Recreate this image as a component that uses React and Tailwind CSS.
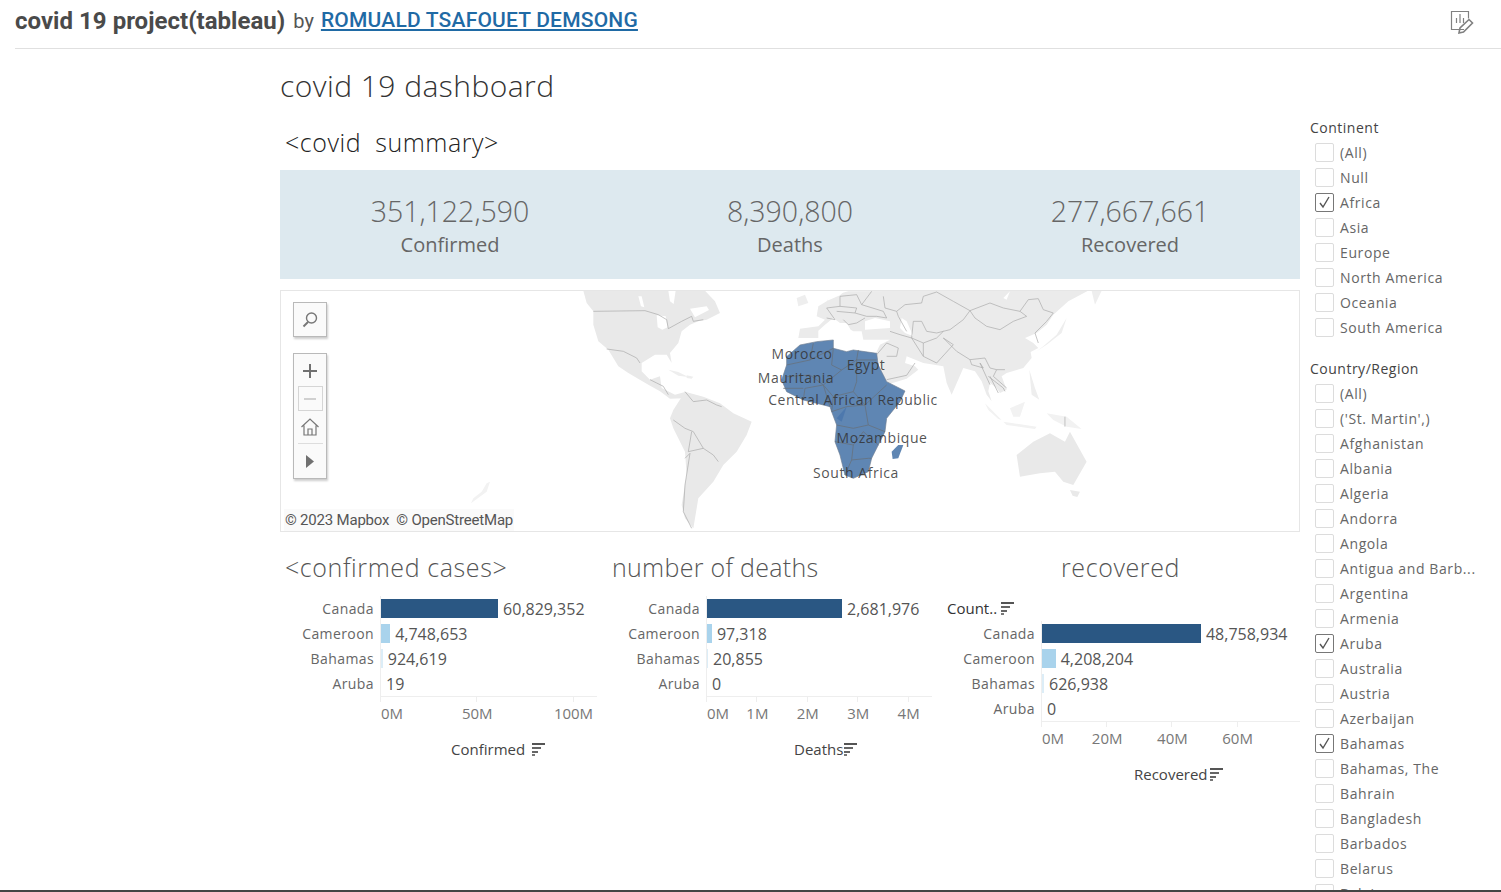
import React from 'react';

const continents = ['(All)', 'Null', 'Africa', 'Asia', 'Europe', 'North America', 'Oceania', 'South America'];
const countries = [
  '(All)', "('St. Martin',)", 'Afghanistan', 'Albania', 'Algeria', 'Andorra', 'Angola', 'Antigua and Barb...',
  'Argentina', 'Armenia', 'Aruba', 'Australia', 'Austria', 'Azerbaijan', 'Bahamas', 'Bahamas, The', 'Bahrain',
  'Bangladesh', 'Barbados', 'Belarus', 'Belgium',
];
const checked = ['Africa', 'Aruba', 'Bahamas'];

// north america, traced from the crop at (575,288) x3
const naLand = '25,8 390,8 420,40 435,75 395,95 370,100 345,110 320,130 310,165 285,195 290,225 275,200 240,200 200,225 200,250 225,275 240,270 255,265 260,300 300,320 330,312 345,330 285,332 255,310 220,290 160,255 130,235 100,185 70,160 55,110 55,70 35,45';
const naHoles = [
  '190,25 200,25 208,58 198,55',
  '280,8 302,8 296,48 285,40',
  '245,82 272,85 278,118 262,125 248,118',
  '345,62 395,55 402,66 360,88',
];
const naIslands = ['280,245 310,252 340,267 310,263', '335,262 355,266 350,272 335,270'];
const naLines = [
  '55,70 210,68 250,80 275,95 280,122 320,100 350,85 355,100 385,95',
  '95,183 145,190 185,210 195,225',
  '225,275 245,285 265,295 280,320',
];

// eurasia, traced from the crop at (790,288) x3
const euLand = '25,150 30,122 85,115 105,95 80,85 85,55 110,40 120,25 175,10 900,5 835,40 790,80 770,110 740,135 705,150 730,165 745,180 722,192 725,210 700,240 650,255 635,265 650,305 630,315 620,300 600,285 595,310 605,340 590,320 575,280 555,250 520,240 485,320 470,285 460,235 400,225 350,205 345,225 375,235 385,245 350,272 290,290 270,230 258,195 270,170 300,155 220,155 215,130 190,130 182,125 170,105 150,105 130,90 105,110 85,128 85,150';
const euHoles = [
  '225,100 255,90 300,100 300,120 225,125',
  '335,90 350,100 370,145 345,135 330,120',
  '640,30 660,10 650,35',
  '112,38 150,22 165,8 120,8',
];
const euIslands = [
  '20,30 45,20 55,45 25,55',
  '830,90 815,135 770,170 740,190 760,175 800,140',
  '905,8 935,8 915,50',
  '718,245 735,300 748,335 725,320',
];
const euLines = [
  '320,70 345,50 395,45 400,25 440,12 490,40 540,68 600,45 640,60 690,70 715,35 745,32 760,65 790,75 770,100 735,135 745,165',
  '540,68 555,90 590,115 630,125 670,100 710,85 690,70',
  '320,70 325,85 350,130',
  '370,100 395,100 410,130 440,135 480,125 520,95 540,68',
  '370,100 365,150 400,165 440,150 460,130',
  '460,150 500,190 540,215 585,210 600,240 620,245 645,245',
  '400,165 400,205 440,225 490,170 460,150',
  '300,130 330,140 365,150 400,205',
  '540,215 545,230 580,240 570,225 600,290',
  '600,265 625,315',
  '595,265 640,300 645,310',
  '620,245 610,265 650,300',
  '260,200 290,165 325,180 320,205 290,205',
  '290,275 350,262 375,225',
  '110,90 135,95 110,60 150,55 150,25 200,20 215,50 280,70 290,90 260,85 230,85 195,75 140,70',
  '160,95 175,110 200,105 225,90',
  '150,55 200,60 195,75',
  '215,50 245,10',
  '320,70 285,60 280,25',
];

// everything else, traced from the crop at (570,285) x3
const restLand = [
  '310,375 345,320 400,335 450,355 490,385 545,410 530,450 500,500 460,540 430,590 385,640 370,730 345,700 335,660 350,570 345,500 310,430 300,400',
  '1340,510 1390,470 1440,445 1485,470 1500,440 1550,530 1510,600 1480,590 1455,560 1410,565 1350,575',
  '1500,615 1530,620 1522,636 1508,632',
];
const restFaint = [
  '1245,355 1295,405 1285,402 1255,375',
  '1300,410 1400,425 1395,432 1310,420',
  '1320,370 1365,350 1350,395 1330,395',
  '1430,385 1490,395 1535,432 1490,425 1450,405',
  '-240,590 -250,620 -297,655 -290,640 -265,620 -250,595',
];
const restLines = [
  '345,320 370,350 410,345 440,360 455,365',
  '310,405 345,430 370,440 400,490 430,510 445,530',
  '345,520 360,505 345,600 340,680 365,730',
  '365,440 355,500 400,490',
  '1485,395 1485,425',
];
const africa = '650,215 690,180 740,170 790,165 790,190 830,200 850,195 920,205 925,240 950,290 1005,318 990,350 950,400 945,440 925,480 905,520 895,560 850,580 825,570 810,510 795,470 800,420 785,380 780,365 700,345 650,320 635,285 650,240';
const africaLines = [
  '650,240 720,225 790,190',
  '720,225 730,175',
  '790,190 785,240 815,255 860,225 865,195',
  '650,275 720,270 760,300 815,255',
  '860,225 920,225',
  '860,225 860,290 850,320 885,360 950,300',
  '700,345 705,310 760,300 780,365',
  '760,300 790,335 850,320',
  '790,335 785,380 830,365 885,360 895,420 945,440',
  '800,420 850,430 895,420',
  '795,470 850,480 880,440 925,480',
  '850,480 845,525 895,520 905,520',
  '825,570 845,525',
  '640,310 700,310',
];
const mapLabels = [
  ['Morocco', 802, 359],
  ['Egypt', 866, 370],
  ['Mauritania', 796, 383],
  ['Central African Republic', 853, 405],
  ['Mozambique', 882, 443],
  ['South Africa', 856, 478],
];

const SortIcon = () => (
  <svg width="14" height="13" viewBox="0 0 14 13" className="shrink-0">
    <rect x="0" y="0" width="13" height="2" fill="#555" />
    <rect x="0" y="4" width="9" height="2" fill="#666" />
    <rect x="0" y="8" width="6" height="2" fill="#666" />
    <rect x="0" y="11" width="3" height="2" fill="#777" />
  </svg>
);

const Check = ({ label }) => {
  const on = checked.includes(label);
  return (
    <div className="flex h-[25px] items-center whitespace-nowrap pl-[5px] text-[14px] tracking-[0.6px] text-[#666]">
      <span className={`flex h-[19px] w-[19px] shrink-0 items-center justify-center rounded-[2px] border bg-white ${on ? 'border-[#777]' : 'border-[#dcdcdc]'}`}>
        {on && (
          <svg width="13" height="13" viewBox="0 0 13 13" fill="none" stroke="#555" strokeWidth="1.4">
            <path d="M2 7l3 4 6-10" />
          </svg>
        )}
      </span>
      <span className="ml-[6px]">{label}</span>
    </div>
  );
};

const Chart = ({ title, titleClass, rows, scale, ticks, labelWidth, head, footClass, foot, width }) => (
  <div className={`${width} shrink-0 overflow-hidden`}>
    <div className={`h-[34px] text-[25px] font-light leading-[34px] text-[#555] ${titleClass}`}>{title}</div>
    <div className="mt-[12px]">
      {head && (
        <div className="flex h-[25px] items-center gap-[4px] text-[15px] text-[#333]">
          {head}
          <SortIcon />
        </div>
      )}
      {rows.map(r => (
        <div key={r.name} className="flex h-[25px] items-center">
          <div className={`${labelWidth} shrink-0 text-right text-[14px] tracking-[0.4px] text-[#666]`}>{r.name}</div>
          <div className="ml-[6px] flex h-full items-center border-l border-[#eeeeee]">
            <div className={`h-[19px] ${r.color}`} style={{ width: r.value * scale }} />
            <span className="ml-[5px] whitespace-nowrap text-[16px] text-[#555]">{r.label}</span>
          </div>
        </div>
      ))}
      <div className="flex">
        <div className={`${labelWidth} shrink-0`} />
        <div className="relative ml-[6px] h-[36px] grow border-t border-[#eeeeee]">
          {ticks.map((t, i) => (
            <React.Fragment key={t}>
              <div className="absolute top-0 h-[5px] w-px bg-[#eeeeee]" style={{ left: t * scale }} />
              <span
                className={`absolute top-[5px] whitespace-nowrap text-[15px] text-[#777] ${i === 0 ? '' : '-translate-x-1/2'}`}
                style={{ left: t * scale + 1 }}
              >
                {t}M
              </span>
            </React.Fragment>
          ))}
        </div>
      </div>
      <div className={`flex h-[34px] items-center text-[15px] text-[#444] ${footClass}`}>
        {foot}
        <SortIcon />
      </div>
    </div>
  </div>
);

const WorldMap = () => (
  <svg width="1018" height="240" viewBox="281 291 1018 240" className="block">
    <g className="blur-[0.4px]">
      <g transform="translate(575 288) scale(0.3333)">
        <polygon points={naLand} fill="#e9e9e9" />
        {naHoles.map(p => <polygon key={p} points={p} fill="#ffffff" />)}
        {naIslands.map(p => <polygon key={p} points={p} fill="#eeeeee" />)}
        {naLines.map(p => <polyline key={p} points={p} fill="none" stroke="#a8a8a8" strokeWidth="2" />)}
      </g>
      <g transform="translate(790 288) scale(0.3333)">
        <polygon points={euLand} fill="#ebebeb" />
        {euHoles.map(p => <polygon key={p} points={p} fill="#ffffff" />)}
        {euIslands.map(p => <polygon key={p} points={p} fill="#eeeeee" />)}
        {euLines.map(p => <polyline key={p} points={p} fill="none" stroke="#a8a8a8" strokeWidth="2" />)}
      </g>
      <g transform="translate(570 285) scale(0.3333)">
        {restLand.map(p => <polygon key={p} points={p} fill="#e9e9e9" />)}
        {restFaint.map(p => <polygon key={p} points={p} fill="#f2f2f2" />)}
        {restLines.map(p => <polyline key={p} points={p} fill="none" stroke="#a8a8a8" strokeWidth="2" />)}
        <polygon points={africa} fill="#5f86b3" stroke="#6f7f92" strokeWidth="2" />
        <polygon points="985,480 1000,480 985,520 968,522 965,500" fill="#5f86b3" />
        {africaLines.map(p => <polyline key={p} points={p} fill="none" stroke="#66727f" strokeWidth="2.5" />)}
        <polygon points="800,400 830,365 815,410" fill="#4d78ad" />
      </g>
    </g>
    {mapLabels.map(([t, x, y]) => (
      <text key={t} x={x} y={y} textAnchor="middle" fontSize="14" fill="#333" fillOpacity="0.85" letterSpacing="0.55">{t}</text>
    ))}
  </svg>
);

const MapControls = () => (
  <>
    <div className="absolute left-[12px] top-[11px] flex h-[35px] w-[34px] items-center justify-center border border-[#b9b9b9] bg-[#fafafa] shadow-[1px_2px_2px_rgba(0,0,0,0.2)]">
      <svg width="18" height="18" viewBox="0 0 18 18" fill="none" stroke="#777" strokeWidth="1.4">
        <circle cx="10.5" cy="7" r="5" />
        <path d="M7 11l-4.5 4.5" strokeWidth="2" />
      </svg>
    </div>
    <div className="absolute left-[12px] top-[62px] flex h-[126px] w-[34px] flex-col items-center border border-[#b9b9b9] bg-[#fafafa] shadow-[1px_2px_2px_rgba(0,0,0,0.2)]">
      <div className="flex h-[32px] w-full items-center justify-center pt-[2px]">
        <svg width="14" height="14" viewBox="0 0 14 14" fill="#707070">
          <path d="M6 0h2v6h6v2H8v6H6V8H0V6h6z" />
        </svg>
      </div>
      <div className="flex h-[25px] w-[25px] items-center justify-center border border-[#d5d5d5]">
        <div className="h-[2px] w-[12px] bg-[#d0d0d0]" />
      </div>
      <div className="flex h-[32px] w-full items-center justify-center">
        <svg width="20" height="20" viewBox="0 0 20 20" fill="none" stroke="#777" strokeWidth="1.2">
          <path d="M1.5 10L10 2l8.5 8M4 8.5V18h12V8.5M8 18v-6h4v6" />
        </svg>
      </div>
      <div className="h-px w-[25px] bg-[#dddddd]" />
      <div className="flex grow items-center justify-center">
        <svg width="10" height="13" viewBox="0 0 10 13" fill="#707070">
          <path d="M1 0l8 6.5L1 13z" />
        </svg>
      </div>
    </div>
  </>
);

export default function App() {
  return (
    <div className="h-[892px] w-[1501px] overflow-hidden border-b-2 border-[#444] bg-white font-['Open_Sans',sans-serif]">
      <header className="ml-[15px] flex h-[49px] items-center border-b border-[#e0e0e0] pb-[6px] font-['Roboto',sans-serif]">
        <span className="text-[24px] font-bold tracking-[0.03px] text-[#4a4a4a]">covid 19 project(tableau)</span>
        <span className="ml-[8px] text-[20px] text-[#555]">by</span>
        <a href="#" className="ml-[7px] text-[21px] font-medium tracking-[0.2px] text-[#1f6aa5] underline">ROMUALD TSAFOUET DEMSONG</a>
        <svg width="24" height="26" viewBox="0 0 24 26" fill="none" stroke="#808080" strokeWidth="1.2" className="ml-auto mr-[27px] mt-[3px]">
          <path d="M14 19.5H1.5V1.5h17v7" />
          <path d="M6.5 13V8M10 13V4M13.5 13V8" />
          <path d="M9 23l1-5L19 9.5l3.5 3.5-9 9z" strokeWidth="1.6" />
        </svg>
      </header>

      <div className="flex pl-[280px]">
        <main className="w-[1020px] shrink-0">
          <h1 className="mt-[19px] h-[36px] text-[30px] font-light leading-[36px] tracking-[0.45px] text-[#333]">covid 19 dashboard</h1>
          <h2 className="mt-[21px] h-[34px] pl-[5px] text-[25px] font-light leading-[34px] tracking-[0.55px] text-[#222]">&lt;covid&nbsp; summary&gt;</h2>

          <section className="mt-[11px] grid h-[109px] grid-cols-3 content-center bg-[#dde9ef] pt-[6px] text-center text-[#666]">
            {[['351,122,590', 'Confirmed'], ['8,390,800', 'Deaths'], ['277,667,661', 'Recovered']].map(([n, l]) => (
              <div key={l}>
                <div className="h-[33px] text-[28.5px] font-light leading-[33px]">{n}</div>
                <div className="text-[20px] leading-[33px]">{l}</div>
              </div>
            ))}
          </section>

          <section className="relative mt-[11px] h-[242px] border border-[#e6e6e6]">
            <WorldMap />
            <MapControls />
            <div className="absolute bottom-0 left-[3px] bg-[#fafafa] px-[1px] font-['Roboto',sans-serif] text-[15px] tracking-[-0.2px] text-[#555]">
              © 2023 Mapbox&nbsp; © OpenStreetMap
            </div>
          </section>

          <section className="mt-[18px] flex gap-[15px] pl-[5px]">
            <Chart
              title="<confirmed cases>"
              titleClass="tracking-[0.6px]"
              width="w-[312px]"
              labelWidth="w-[89px]"
              scale={1.925}
              ticks={[0, 50, 100]}
              foot="Confirmed"
              footClass="gap-[7px] pl-[166px]"
              rows={[
                { name: 'Canada', value: 60.83, label: '60,829,352', color: 'bg-[#2a5783]' },
                { name: 'Cameroon', value: 4.75, label: '4,748,653', color: 'bg-[#a9d3ec]' },
                { name: 'Bahamas', value: 0.92, label: '924,619', color: 'bg-[#dcedf7]' },
                { name: 'Aruba', value: 0, label: '19', color: 'bg-[#dcedf7]' },
              ]}
            />
            <Chart
              title="number of deaths"
              titleClass="tracking-[0.3px]"
              width="w-[320px]"
              labelWidth="w-[88px]"
              scale={50.4}
              ticks={[0, 1, 2, 3, 4]}
              foot="Deaths"
              footClass="gap-[1px] pl-[182px]"
              rows={[
                { name: 'Canada', value: 2.68, label: '2,681,976', color: 'bg-[#2a5783]' },
                { name: 'Cameroon', value: 0.0973, label: '97,318', color: 'bg-[#a9d3ec]' },
                { name: 'Bahamas', value: 0.0209, label: '20,855', color: 'bg-[#dcedf7]' },
                { name: 'Aruba', value: 0, label: '0', color: 'bg-[#dcedf7]' },
              ]}
            />
            <Chart
              title="recovered"
              titleClass="pr-[6px] text-center tracking-[0.6px]"
              width="w-[353px]"
              labelWidth="w-[88px]"
              scale={3.26}
              ticks={[0, 20, 40, 60]}
              head="Count.."
              foot="Recovered"
              footClass="gap-[2px] pl-[187px]"
              rows={[
                { name: 'Canada', value: 48.76, label: '48,758,934', color: 'bg-[#2a5783]' },
                { name: 'Cameroon', value: 4.21, label: '4,208,204', color: 'bg-[#a9d3ec]' },
                { name: 'Bahamas', value: 0.63, label: '626,938', color: 'bg-[#dcedf7]' },
                { name: 'Aruba', value: 0, label: '0', color: 'bg-[#dcedf7]' },
              ]}
            />
          </section>
        </main>

        <aside className="ml-[10px] w-[191px] shrink-0 pt-[67px]">
          <div className="h-[24px] text-[14px] leading-[24px] tracking-[0.5px] text-[#444]">Continent</div>
          {continents.map(c => <Check key={c} label={c} />)}
          <div className="mt-[17px] h-[24px] text-[14px] leading-[24px] tracking-[0.5px] text-[#444]">Country/Region</div>
          {countries.map(c => <Check key={c} label={c} />)}
        </aside>
      </div>
    </div>
  );
}
